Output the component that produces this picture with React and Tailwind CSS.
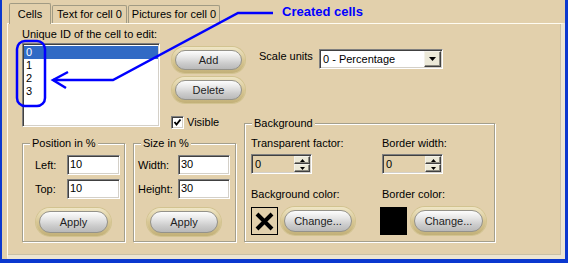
import React from 'react';

const SUNKEN =
  'border border-t-[#7f7f7f] border-l-[#7f7f7f] border-b-white border-r-white shadow-[inset_1px_1px_0_#404040,inset_-1px_-1px_0_#d4d0c8]';
const RAISED =
  'bg-[#ece9d8] border border-t-[#f4f2ea] border-l-[#f4f2ea] border-b-[#404040] border-r-[#404040] shadow-[inset_-1px_-1px_0_#8c8a80]';

const XpButton = ({ label, size }) => (
  <div
    className={`${size} rounded-full p-[3px] bg-[linear-gradient(180deg,#efe6c6_0%,#d8c794_50%,#c2b078_100%)] shadow-[0_0_0_1px_#d2c390]`}
  >
    <div className="h-full w-full rounded-full border border-[#94928a] bg-[linear-gradient(180deg,#fdfdfd_0%,#e6e6e6_35%,#cbcbcb_70%,#b9b9b9_100%)] flex items-center justify-center text-[11px] text-[#1e1e1e]">
      {label}
    </div>
  </div>
);

const Group = ({ title, className, children }) => (
  <fieldset className={`border border-[#a49f8c] shadow-[inset_1px_1px_0_#fff,1px_1px_0_#fff] ${className}`}>
    <legend className="ml-[7px] px-[2px] leading-[13px] bg-[#e2d0ac]">{title}</legend>
    {children}
  </fieldset>
);

const Field = ({ label, value, labelW, inputW }) => (
  <div className="flex items-center">
    <span className={`${labelW} leading-[13px]`}>{label}</span>
    <div className={`${inputW} h-[20px] bg-white ${SUNKEN} pl-[2px] leading-[16px]`}>{value}</div>
  </div>
);

const Arrow = ({ up }) => (
  <svg width="5" height="3" viewBox="0 0 5 3">
    <path d={up ? 'M2.5 0 L5 3 L0 3 Z' : 'M0 0 L5 0 L2.5 3 Z'} fill="#000" />
  </svg>
);

const Spinner = () => (
  <div className={`w-[61px] h-[20px] flex ${SUNKEN} p-px`}>
    <div className="flex-1 pl-[2px] leading-[16px]">0</div>
    <div className="flex flex-col w-[16px]">
      <div className={`h-[8px] ${RAISED} flex items-center justify-center`}>
        <Arrow up />
      </div>
      <div className={`h-[8px] ${RAISED} flex items-center justify-center`}>
        <Arrow />
      </div>
    </div>
  </div>
);

const App = () => {
  const ids = ['0', '1', '2', '3'];

  return (
    <div className="relative w-[568px] h-[263px] flex bg-[#0b38cf] pl-[2px] pr-[3px] pb-[4px] text-[11px] text-black font-['Liberation_Sans',Arial,sans-serif]">
      <div className="flex-1 flex flex-col bg-[#e2d0ac] pt-[3px] pl-[5px]">
        {/* tabs */}
        <div className="flex items-end gap-px ml-[2px] h-[20px]">
          <div className="relative z-10 -mb-px w-[42px] h-[21px] bg-[#e2d0ac] border border-b-0 border-[#a19b84] rounded-t-[2px] flex items-center justify-center leading-[13px]">
            Cells
          </div>
          <div className="w-[75px] h-[18px] bg-[#e2d0ac] border border-b-0 border-[#a19b84] rounded-t-[2px] flex items-center justify-center leading-[13px] whitespace-nowrap">
            Text for cell 0
          </div>
          <div className="w-[92px] h-[18px] bg-[#e2d0ac] border border-b-0 border-[#a19b84] rounded-t-[2px] flex items-center justify-center leading-[13px] whitespace-nowrap">
            Pictures for cell 0
          </div>
        </div>

        {/* panel */}
        <div className="flex-1 flex border-l border-t border-l-[#fffcf2] border-t-[#fffcf2] border-r-[4px] border-b-[4px] border-r-[#ece5d3] border-b-[#ece5d3] shadow-[inset_-1px_-1px_0_#c9c0a6] pl-[14px] pt-[4px]">
          {/* left block */}
          <div className="w-[222px] flex flex-col">
            <div className="h-[109px] flex">
              <div className="w-[138px] flex flex-col">
                <span className="leading-[13px] whitespace-nowrap">Unique ID of the cell to edit:</span>
                <div className={`mt-[2px] w-[138px] h-[84px] bg-white ${SUNKEN} p-px`}>
                  <div className="pt-px">
                    {ids.map((id, i) => (
                      <div
                        key={id}
                        className={`h-[13px] leading-[13px] pl-[2px] ${i === 0 ? 'bg-[#316ac5] text-white' : ''}`}
                      >
                        {id}
                      </div>
                    ))}
                  </div>
                </div>
              </div>
              <div className="ml-[12px] shrink-0 flex flex-col">
                <div className="mt-[19px]">
                  <XpButton label="Add" size="w-[73px] h-[26px]" />
                </div>
                <div className="mt-[4px]">
                  <XpButton label="Delete" size="w-[73px] h-[26px]" />
                </div>
                <div className="mt-[13px] -ml-px flex items-center gap-[3px]">
                  <div className={`w-[13px] h-[13px] bg-white ${SUNKEN} flex items-center justify-center`}>
                    <svg width="9" height="9" viewBox="0 0 9 9">
                      <path d="M1.5 4 L3.5 6.5 L7.5 1.5" stroke="#000" strokeWidth="1.9" fill="none" />
                    </svg>
                  </div>
                  <span className="leading-[13px]">Visible</span>
                </div>
              </div>
            </div>

            <div className="flex gap-[8px]">
              <Group title="Position in %" className="w-[103px] h-[105px]">
                <div className="pt-[5px] pl-[12px] flex flex-col">
                  <Field label="Left:" value="10" labelW="w-[32px]" inputW="w-[53px]" />
                  <div className="mt-[4px]">
                    <Field label="Top:" value="10" labelW="w-[32px]" inputW="w-[53px]" />
                  </div>
                  <div className="mt-[9px] ml-[1px]">
                    <XpButton label="Apply" size="w-[75px] h-[28px]" />
                  </div>
                </div>
              </Group>
              <Group title="Size in %" className="w-[103px] h-[105px]">
                <div className="pt-[5px] pl-[4px] flex flex-col">
                  <Field label="Width:" value="30" labelW="w-[40px]" inputW="w-[52px]" />
                  <div className="mt-[4px]">
                    <Field label="Height:" value="30" labelW="w-[40px]" inputW="w-[52px]" />
                  </div>
                  <div className="mt-[9px] ml-[9px]">
                    <XpButton label="Apply" size="w-[74px] h-[28px]" />
                  </div>
                </div>
              </Group>
            </div>
          </div>

          {/* right block */}
          <div className="flex flex-col">
            <div className="mt-[21px] pl-[15px] flex items-start">
              <span className="w-[60px] pt-px leading-[13px]">Scale units</span>
              <div className={`w-[124px] h-[20px] flex bg-white ${SUNKEN} p-px`}>
                <div className="flex-1 pl-[2px] leading-[16px]">0 - Percentage</div>
                <div className={`w-[17px] h-[16px] ${RAISED} flex items-center justify-center`}>
                  <svg width="7" height="4" viewBox="0 0 7 4">
                    <path d="M0 0 L7 0 L3.5 4 Z" fill="#000" />
                  </svg>
                </div>
              </div>
            </div>

            <Group title="Background" className="mt-[48px] w-[251px] h-[125px]">
              <div className="pl-[6px] pt-[7px] grid grid-cols-[131px_auto]">
                <div className="flex flex-col">
                  <span className="leading-[13px]">Transparent factor:</span>
                  <div className="mt-[4px]">
                    <Spinner />
                  </div>
                </div>
                <div className="flex flex-col">
                  <span className="leading-[13px]">Border width:</span>
                  <div className="mt-[4px]">
                    <Spinner />
                  </div>
                </div>
                <div className="mt-[14px] flex flex-col">
                  <span className="leading-[13px]">Background color:</span>
                  <div className="mt-[6px] flex items-center gap-[3px]">
                    <div className="w-[27px] h-[28px] border border-black flex items-center justify-center">
                      <svg width="19" height="19" viewBox="0 0 19 19">
                        <path d="M2 2 L17 17 M17 2 L2 17" stroke="#000" strokeWidth="4" />
                      </svg>
                    </div>
                    <XpButton label="Change..." size="w-[74px] h-[28px]" />
                  </div>
                </div>
                <div className="mt-[14px] flex flex-col">
                  <span className="leading-[13px]">Border color:</span>
                  <div className="mt-[6px] -ml-[2px] flex items-center gap-[4px]">
                    <div className="w-[27px] h-[28px] bg-black" />
                    <XpButton label="Change..." size="w-[75px] h-[28px]" />
                  </div>
                </div>
              </div>
            </Group>
          </div>
        </div>
      </div>

      {/* annotation */}
      <svg
        className="absolute inset-0 pointer-events-none"
        width="568"
        height="263"
        viewBox="0 0 568 263"
      >
        <rect x="17" y="41" width="28" height="65" rx="8" fill="none" stroke="#0000ff" strokeWidth="2.5" />
        <polyline points="273,13 238,13 113,80 53,80" fill="none" stroke="#0000ff" strokeWidth="2.5" />
        <polyline points="68,72 53,80 66,88" fill="none" stroke="#0000ff" strokeWidth="2.5" />
      </svg>
      <span className="absolute left-[282px] top-[4px] text-[13px] leading-[15px] font-bold text-[#0000ff]">
        Created cells
      </span>
    </div>
  );
};

export default App;
